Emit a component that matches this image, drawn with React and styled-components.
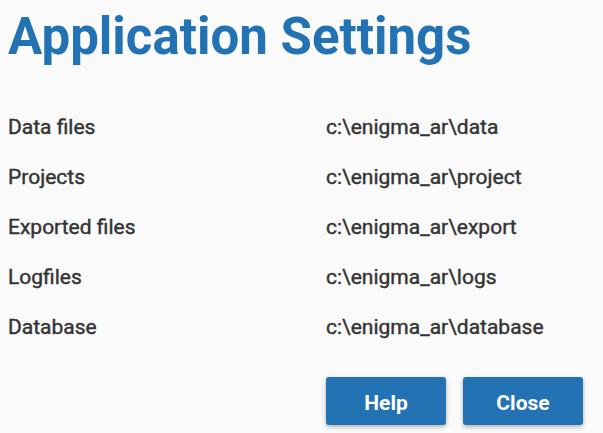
import React from 'react';
import styled, { createGlobalStyle } from 'styled-components';

const GlobalStyle = createGlobalStyle`
  html, body {
    margin: 0;
    padding: 0;
    background: #fafafa;
  }
  body {
    font-family: Roboto, "Liberation Sans", sans-serif;
  }
`;

const Page = styled.div`
  width: 603px;
  height: 433px;
  box-sizing: border-box;
  padding: 6px 20px 0 8px;
  display: flex;
  flex-direction: column;
`;

const Title = styled.h1`
  margin: 0;
  font-size: 51px;
  line-height: 62px;
  font-weight: 700;
  color: #2272b4;
`;

const SettingsGrid = styled.div`
  display: grid;
  grid-template-columns: 318px 1fr;
  grid-auto-rows: 50px;
  align-items: center;
  margin-top: 34px;
`;

const Cell = styled.div`
  font-size: 21px;
  font-weight: 400;
  color: #333;
  -webkit-text-stroke: 0.4px #333;
`;

const Actions = styled.div`
  display: flex;
  justify-content: flex-end;
  gap: 17px;
  margin-top: 25px;
`;

const Button = styled.button`
  width: 120px;
  height: 48px;
  padding: 3px 0 0;
  border: none;
  border-radius: 3px;
  background: #2272b4;
  color: #fff;
  font-family: Roboto, "Liberation Sans", sans-serif;
  font-size: 21px;
  font-weight: 700;
  box-shadow: 0 2px 4px rgba(0, 0, 0, 0.3);
  cursor: pointer;
`;

const settings = [
  ['Data files', 'c:\\enigma_ar\\data'],
  ['Projects', 'c:\\enigma_ar\\project'],
  ['Exported files', 'c:\\enigma_ar\\export'],
  ['Logfiles', 'c:\\enigma_ar\\logs'],
  ['Database', 'c:\\enigma_ar\\database'],
];

const App = () => (
  <>
    <GlobalStyle />
    <Page>
      <Title>Application Settings</Title>
      <SettingsGrid>
        {settings.map(([label, path]) => (
          <React.Fragment key={label}>
            <Cell>{label}</Cell>
            <Cell>{path}</Cell>
          </React.Fragment>
        ))}
      </SettingsGrid>
      <Actions>
        <Button>Help</Button>
        <Button>Close</Button>
      </Actions>
    </Page>
  </>
);

export default App;
